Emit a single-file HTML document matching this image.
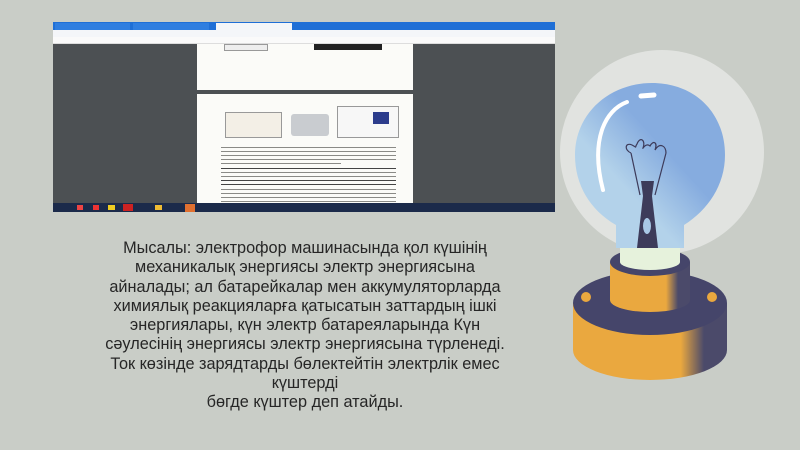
<!DOCTYPE html>
<html><head><meta charset="utf-8"><style>
html,body{margin:0;padding:0}
body{width:800px;height:450px;background:#c9cdc7;position:relative;overflow:hidden;font-family:"Liberation Sans","DejaVu Sans",sans-serif}
.shot{position:absolute;left:53px;top:22px;width:502px;height:190px;background:#4c5053;overflow:hidden}
.tabs{position:absolute;left:0;top:0;width:502px;height:8px;background:#1f6fd6}
.tab{position:absolute;top:1px;height:7px;background:#3d86e0}
.addr{position:absolute;left:0;top:8px;width:502px;height:7px;background:#f4f6f9}
.bm{position:absolute;left:0;top:15px;width:502px;height:6px;background:#fafafa;border-bottom:1px solid #ddd}
.page{position:absolute;background:#fbfbf8}
.line{position:absolute;height:1.3px;background:#8a8a86}
.task{position:absolute;left:0;top:181px;width:502px;height:9px;background:#1b2a4a}
.txt{position:absolute;left:5px;top:239px;width:600px;text-align:center;font-size:16.3px;line-height:19.3px;color:#262626}
</style></head><body>
<div class="shot">
 <div class="tabs"><div class="tab" style="left:2px;width:75px;background:#2f7ee0"></div><div class="tab" style="left:80px;width:76px;background:#2f7ee0"></div><div class="tab" style="left:163px;width:76px;background:#f4f6f9"></div></div>
 <div class="addr"></div>
 <div class="bm"></div>
 <div class="page" style="left:144px;top:22px;width:216px;height:46px"></div>
 <div style="position:absolute;left:171px;top:22px;width:42px;height:5px;border:1px solid #999;background:#eee"></div>
 <div style="position:absolute;left:261px;top:22px;width:68px;height:6px;background:#222"></div>
 <div class="page" style="left:144px;top:72px;width:216px;height:110px"></div>
 <div style="position:absolute;left:172px;top:90px;width:55px;height:24px;border:1px solid #999;background:#f3efe6"></div>
 <div style="position:absolute;left:238px;top:92px;width:38px;height:22px;background:#c9ccd0;border-radius:3px"></div>
 <div style="position:absolute;left:284px;top:84px;width:60px;height:30px;border:1px solid #999;background:#f7f7f7"></div>
 <div style="position:absolute;left:320px;top:90px;width:16px;height:12px;background:#2c3c8c"></div>
 <div class="line" style="left:168px;top:125px;width:175px"></div>
 <div class="line" style="left:168px;top:129px;width:175px"></div>
 <div class="line" style="left:168px;top:133px;width:175px"></div>
 <div class="line" style="left:168px;top:137px;width:175px"></div>
 <div class="line" style="left:168px;top:141px;width:120px"></div>
 <div class="line" style="left:168px;top:146px;width:175px;background:#444"></div>
 <div class="line" style="left:168px;top:150px;width:175px"></div>
 <div class="line" style="left:168px;top:154px;width:175px"></div>
 <div class="line" style="left:168px;top:158px;width:175px;background:#444"></div>
 <div class="line" style="left:168px;top:162px;width:175px;background:#444"></div>
 <div class="line" style="left:168px;top:167px;width:175px"></div>
 <div class="line" style="left:168px;top:171px;width:175px"></div>
 <div class="line" style="left:168px;top:175px;width:175px"></div>
 <div class="line" style="left:168px;top:179px;width:175px"></div>
 <div class="task">
  <div style="position:absolute;left:24px;top:2px;width:6px;height:5px;background:#e44"></div>
  <div style="position:absolute;left:40px;top:2px;width:6px;height:5px;background:#e33"></div>
  <div style="position:absolute;left:55px;top:2px;width:7px;height:5px;background:#ec2"></div>
  <div style="position:absolute;left:70px;top:1px;width:10px;height:7px;background:#c22"></div>
  <div style="position:absolute;left:102px;top:2px;width:7px;height:5px;background:#eb3"></div>
  <div style="position:absolute;left:132px;top:1px;width:10px;height:8px;background:#e07030"></div>
 </div>
</div>
<div class="txt">Мысалы: электрофор машинасында қол күшінің<br>механикалық энергиясы электр энергиясына<br>айналады; ал батарейкалар мен аккумуляторларда<br>химиялық реакцияларға қатысатын заттардың ішкі<br>энергиялары, күн электр батареяларында Күн<br>сәулесінің энергиясы электр энергиясына түрленеді.<br>Ток көзінде зарядтарды бөлектейтін электрлік емес<br>күштерді<br>бөгде күштер деп атайды.</div>
<svg style="position:absolute;left:0;top:0" width="800" height="450">
 <defs>
  <linearGradient id="g" x1="0" y1="1" x2="1" y2="0">
   <stop offset="0.35" stop-color="#b3d2ea"/><stop offset="0.6" stop-color="#86acdf"/>
  </linearGradient>
  <linearGradient id="sh" x1="0" y1="0" x2="1" y2="0">
   <stop offset="0" stop-color="#eaa83f"/><stop offset="0.7" stop-color="#eaa83f"/><stop offset="0.85" stop-color="#4b4a6a"/>
  </linearGradient>
 </defs>
 <circle cx="662" cy="152" r="102" fill="#e1e3e0"/>
 <path d="M573 303 L573 350 A77 30 0 0 0 727 350 L727 303 Z" fill="url(#sh)"/>
 <ellipse cx="650" cy="303" rx="77" ry="32" fill="#45456a"/>
 <circle cx="586" cy="297" r="5" fill="#eaa83f"/>
 <circle cx="712" cy="297" r="5" fill="#eaa83f"/>
 <path d="M610 262 L610 300 A40 12 0 0 0 690 300 L690 262 Z" fill="url(#sh)"/>
 <ellipse cx="650" cy="262" rx="40" ry="14" fill="#45456a"/>
 <path d="M620 245 L680 245 L680 262 A30 8 0 0 1 620 262 Z" fill="#e6f2dc"/>
 <path d="M616 248 L616 225 C590 210 575 185 575 155 C575 113 610 83 652 83 C695 83 725 113 725 155 C725 185 708 210 684 225 L684 248 Z" fill="url(#g)"/>
 <path d="M627 102 C605 110 590 140 603 190" stroke="#fff" stroke-width="4" fill="none" stroke-linecap="round"/>
 <path d="M641 96 L654 95" stroke="#fff" stroke-width="5" stroke-linecap="round"/>
 <path d="M641 181 L654 181 L652 196 L658 248 L637 248 L643 196 Z" fill="#3d3b5a"/>
 <ellipse cx="647" cy="226" rx="4" ry="8" fill="#a9c8e6"/>
 <path d="M640 195 L631 153 M655 195 L666 153" stroke="#3d3b5a" stroke-width="1.2" fill="none"/>
 <path d="M631 153 C624 150 625 142 632 145 C638 148 634 148 637 144 C640 136 646 140 643 148 C642 150 646 142 650 146 C653 140 658 142 655 150 C660 142 666 146 666 153" stroke="#3d3b5a" stroke-width="1.2" fill="none"/>
</svg>
</body></html>
